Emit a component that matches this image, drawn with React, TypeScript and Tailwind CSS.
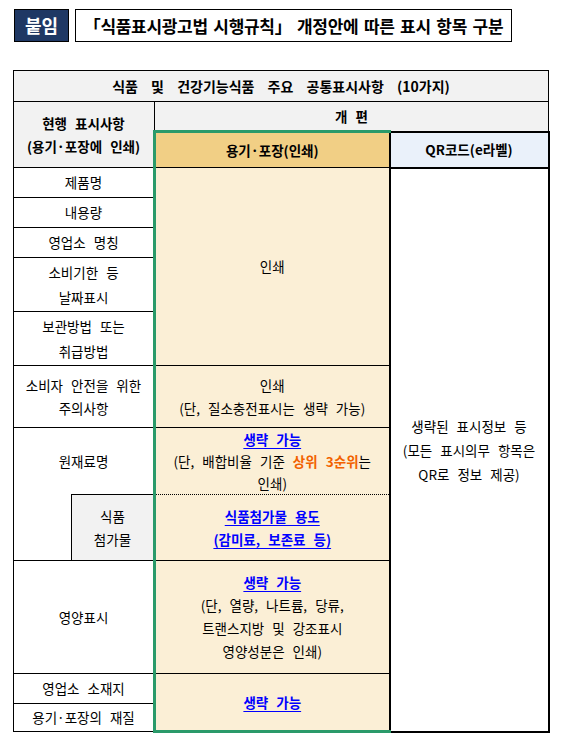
import React from 'react';

const td = 'border border-black text-center align-middle p-0';
const mid = 'bg-[#fbefd6] border-l-[3px] border-l-[#2a9a6a]';
const blue = 'font-bold text-[#0000ff] underline underline-offset-[3px] decoration-1';

export default function App() {
  return (
    <div className="min-h-[744px] w-[566px] bg-white pt-[9px] font-['Noto_Sans_CJK_KR',sans-serif] text-black [word-spacing:5px]">
      {/* Header */}
      <div className="flex items-stretch pl-[14px] gap-[6px] h-[33px]">
        <div className="w-[55px] flex items-center justify-center bg-[#1f3864] border border-black text-white font-bold text-[18px] [word-spacing:0]">
          붙임
        </div>
        <div className="w-[437px] flex items-center justify-center border border-black font-bold text-[17px] tracking-[-0.3px] [word-spacing:2px]">
          「식품표시광고법 시행규칙」 개정안에 따른 표시 항목 구분
        </div>
      </div>

      {/* Table */}
      <table className="mt-[28px] ml-[13px] w-[535px] table-fixed border-collapse text-[13.5px] leading-[23px]">
        <colgroup>
          <col className="w-[58px]" />
          <col className="w-[83px]" />
          <col className="w-[235px]" />
          <col className="w-[159px]" />
        </colgroup>
        <tbody>
          <tr className="h-[31px]">
            <td colSpan={4} className={`${td} bg-[#f2f2f2] font-bold text-[14px] [word-spacing:10px]`}>
              식품 및 건강기능식품 주요 공통표시사항 (10가지)
            </td>
          </tr>
          <tr className="h-[30px]">
            <td colSpan={2} rowSpan={2} className={`${td} bg-[#f2f2f2] font-bold`}>
              현행 표시사항
              <br />
              (용기·포장에 인쇄)
            </td>
            <td colSpan={2} className={`${td} bg-[#f2f2f2] font-bold`}>
              개 편
            </td>
          </tr>
          <tr className="h-[36px]">
            <td className={`${td} bg-[#f1cf85] border-l-[3px] border-l-[#2a9a6a] border-t-[3px] border-t-[#2a9a6a] font-bold`}>
              용기·포장(인쇄)
            </td>
            <td className={`${td} bg-[#eaf1fa] border-[2px] border-[#861f9c] border-b-black border-b-[1px] font-bold [word-spacing:0]`}>
              QR코드(e라벨)
            </td>
          </tr>
          <tr className="h-[30px]">
            <td colSpan={2} className={td}>제품명</td>
            <td rowSpan={5} className={`${td} ${mid}`}>인쇄</td>
            <td rowSpan={11} className={`${td} border-[2px] border-[#861f9c] leading-[24px]`}>
              생략된 표시정보 등
              <br />
              (모든 표시의무 항목은
              <br />
              QR로 정보 제공)
            </td>
          </tr>
          <tr className="h-[30px]">
            <td colSpan={2} className={td}>내용량</td>
          </tr>
          <tr className="h-[30px]">
            <td colSpan={2} className={td}>영업소 명칭</td>
          </tr>
          <tr className="h-[54px]">
            <td colSpan={2} className={`${td} leading-[25px]`}>
              소비기한 등
              <br />
              날짜표시
            </td>
          </tr>
          <tr className="h-[54px]">
            <td colSpan={2} className={`${td} leading-[25px]`}>
              보관방법 또는
              <br />
              취급방법
            </td>
          </tr>
          <tr className="h-[62px]">
            <td colSpan={2} className={td}>
              소비자 안전을 위한
              <br />
              주의사항
            </td>
            <td className={`${td} ${mid}`}>
              인쇄
              <br />
              (단, 질소충전표시는 생략 가능)
            </td>
          </tr>
          <tr className="h-[67px]">
            <td colSpan={2} className={`${td} border-b-0`}>원재료명</td>
            <td className={`${td} ${mid} leading-[22px] [border-bottom-style:dotted]`}>
              <span className={blue}>생략 가능</span>
              <br />
              (단, 배합비율 기준 <span className="font-bold text-[#f26200]">상위 3순위</span>는
              <br />
              인쇄)
            </td>
          </tr>
          <tr className="h-[66px]">
            <td className={`${td} border-t-0`}></td>
            <td className={`${td} bg-[#f2f2f2]`}>
              식품
              <br />
              첨가물
            </td>
            <td className={`${td} ${mid} [border-top-style:dotted]`}>
              <span className={blue}>식품첨가물 용도</span>
              <br />
              <span className={blue}>(감미료, 보존료 등)</span>
            </td>
          </tr>
          <tr className="h-[113px]">
            <td colSpan={2} className={td}>영양표시</td>
            <td className={`${td} ${mid}`}>
              <span className={blue}>생략 가능</span>
              <br />
              (단, 열량, 나트륨, 당류,
              <br />
              트랜스지방 및 강조표시
              <br />
              영양성분은 인쇄)
            </td>
          </tr>
          <tr className="h-[30px]">
            <td colSpan={2} className={td}>영업소 소재지</td>
            <td rowSpan={2} className={`${td} ${mid} border-b-[3px] border-b-[#2a9a6a]`}>
              <span className={blue}>생략 가능</span>
            </td>
          </tr>
          <tr className="h-[28px]">
            <td colSpan={2} className={td}>용기·포장의 재질</td>
          </tr>
        </tbody>
      </table>
    </div>
  );
}
